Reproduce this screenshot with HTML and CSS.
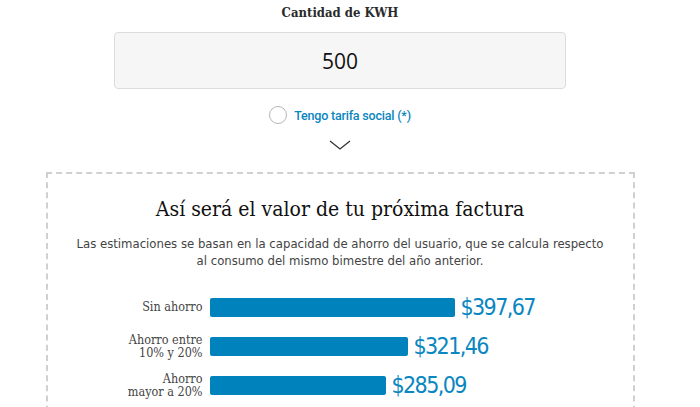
FILE: index.html
```html
<!DOCTYPE html>
<html lang="es">
<head>
<meta charset="utf-8">
<link rel="stylesheet" href="styles.css">
</head>
<body>
<div class="page">
  <div class="field-label">Cantidad de KWH</div>
  <div class="input-box">500</div>
  <div class="radio-row">
    <span class="radio"></span>
    <span class="radio-text">Tengo tarifa social (*)</span>
  </div>
  <div class="chevron">
    <svg width="22" height="10" viewBox="0 0 22 10"><polyline points="1,1 11,9 21,1" fill="none" stroke="#333" stroke-width="1.3"/></svg>
  </div>
  <div class="result">
    <h2 class="result-title">Así será el valor de tu próxima factura</h2>
    <p class="result-desc">Las estimaciones se basan en la capacidad de ahorro del usuario, que se calcula respecto<br>al consumo del mismo bimestre del año anterior.</p>
    <div class="bars">
      <div class="bar-row">
        <div class="bar-label">Sin ahorro</div>
        <div class="bar" style="width:245px"></div>
        <div class="bar-value">$397,67</div>
      </div>
      <div class="bar-row">
        <div class="bar-label">Ahorro entre<br>10% y 20%</div>
        <div class="bar" style="width:198px"></div>
        <div class="bar-value">$321,46</div>
      </div>
      <div class="bar-row">
        <div class="bar-label">Ahorro<br>mayor a 20%</div>
        <div class="bar" style="width:176px"></div>
        <div class="bar-value">$285,09</div>
      </div>
    </div>
  </div>
</div>
</body>
</html>
```
FILE: styles.css
```css
html, body {
  margin: 0;
  padding: 0;
  background: #fff;
  overflow: hidden;
}
.page {
  width: 680px;
  display: flex;
  flex-direction: column;
  align-items: center;
}
.field-label {
  margin-top: 5px;
  font-family: "DejaVu Serif", serif;
  font-stretch: condensed;
  font-weight: bold;
  font-size: 13px;
  line-height: 16px;
  color: #2a2a2a;
}
.input-box {
  margin-top: 11px;
  width: 450px;
  height: 55px;
  box-sizing: content-box;
  border: 1px solid #dcdcdc;
  border-radius: 4px;
  background: #f6f6f6;
  display: flex;
  align-items: center;
  justify-content: center;
  font-family: "Open Sans", sans-serif;
  font-size: 21px;
  color: #111;
}
.radio-row {
  margin-top: 17px;
  display: flex;
  align-items: center;
  gap: 7px;
  height: 18px;
}
.radio {
  width: 16px;
  height: 16px;
  border: 1.5px solid #b5b5b5;
  border-radius: 50%;
  background: #fff;
}
.radio-text {
  font-family: Roboto, sans-serif;
  font-weight: 500;
  font-size: 12.5px;
  letter-spacing: -0.2px;
  color: #0a86c0;
}
.chevron {
  margin-top: 16px;
  height: 10px;
  display: flex;
}
.result {
  margin-top: 22px;
  width: 589px;
  box-sizing: border-box;
  border: 2px dashed #d0d0d0;
  border-bottom: none;
  padding-top: 21px;
  display: flex;
  flex-direction: column;
  align-items: center;
  height: 260px;
}
.result-title {
  margin: 0;
  font-family: "DejaVu Serif", serif;
  font-stretch: condensed;
  font-weight: normal;
  font-size: 21px;
  line-height: 28px;
  color: #111;
}
.result-desc {
  margin: 12px 0 0;
  text-align: center;
  font-family: "DejaVu Sans", sans-serif;
  font-stretch: condensed;
  font-size: 13px;
  line-height: 17px;
  color: #444;
}
.bars {
  margin-top: 28px;
  align-self: stretch;
  display: flex;
  flex-direction: column;
  gap: 19px;
  padding-left: 55px;
}
.bar-row {
  display: flex;
  align-items: center;
  height: 20px;
}
.bar-label {
  width: 100px;
  text-align: right;
  font-family: "DejaVu Serif", serif;
  font-stretch: condensed;
  font-size: 12.5px;
  line-height: 13.5px;
  color: #444;
  margin-right: 7px;
}
.bar {
  height: 19px;
  background: #0083bc;
  border-radius: 2px;
}
.bar-value {
  margin-left: 6px;
  font-family: "DejaVu Sans", sans-serif;
  font-stretch: condensed;
  font-size: 23px;
  letter-spacing: -1.6px;
  line-height: 20px;
  color: #0a86c0;
}
```
